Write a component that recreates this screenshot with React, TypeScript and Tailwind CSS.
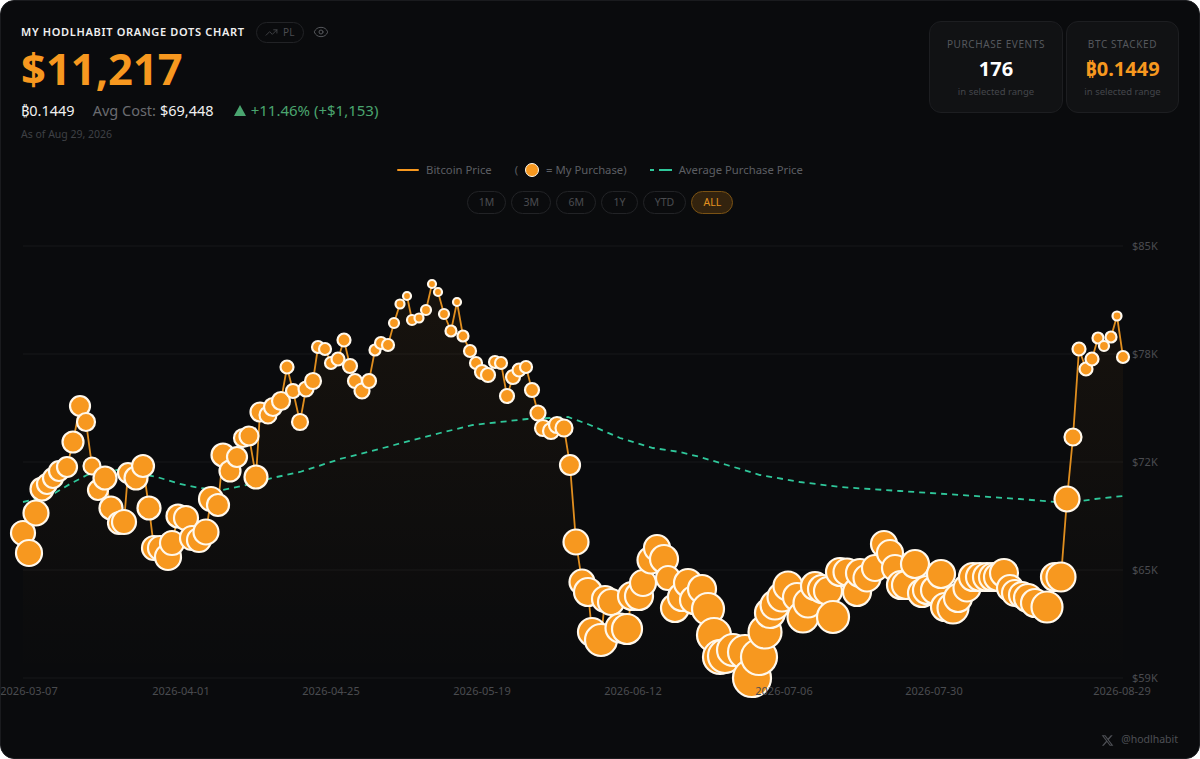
import {Eye, TrendingUp} from 'lucide-react';

// purchases, oldest first: x, y, outer radius (page px)
const dots: Array<[number, number, number]> = [
  [23, 533, 13], [29, 553, 14], [36, 513, 13.5], [42, 489, 12.5], [47, 484, 11], [53, 478, 11],
  [59, 471, 11], [67, 467, 11], [73, 442, 11.5], [80, 406, 11], [86, 422, 10], [92, 466, 9.5],
  [98, 490, 11], [105, 478, 12.5], [111, 508, 12.5], [119, 523, 12], [124, 522, 13], [128, 473, 11],
  [136, 478, 12.5], [143, 466, 12], [149, 508, 12.5], [154, 548, 13], [160, 548, 13], [168, 557, 14],
  [172, 543, 13], [178, 516, 12.5], [186, 518, 13], [192, 538, 13], [199, 540, 13], [206, 532, 13.5],
  [211, 499, 13], [218, 505, 12], [223, 455, 12.5], [230, 471, 11.5], [237, 457, 11], [243, 438, 10],
  [249, 436, 10.5], [256, 477, 12.5], [260, 412, 10.5], [268, 415, 9.5], [273, 407, 10], [281, 401, 10],
  [287, 367, 7.5], [293, 391, 8], [300, 422, 9], [306, 389, 8.5], [313, 381, 9], [318, 347, 7],
  [325, 349, 7], [331, 363, 7], [338, 359, 7.5], [344, 340, 7.5], [350, 366, 8], [355, 381, 8],
  [362, 391, 8.5], [369, 381, 8], [375, 350, 6.5], [381, 343, 7], [388, 345, 7], [394, 323, 6],
  [400, 304, 5.5], [407, 296, 5], [412, 320, 6], [419, 318, 5.5], [426, 310, 6], [432, 284, 5],
  [438, 292, 5], [444, 314, 6], [451, 331, 6.5], [457, 302, 5], [463, 336, 6.5], [470, 351, 7],
  [476, 363, 7], [482, 372, 8], [488, 375, 8], [495, 362, 7], [501, 363, 7], [507, 396, 8],
  [513, 377, 8], [519, 370, 7.5], [526, 367, 7], [532, 390, 8], [538, 413, 8.5], [543, 428, 9],
  [551, 431, 9], [557, 425, 9], [564, 428, 9.5], [570, 465, 11], [576, 542, 13.5], [582, 582, 13.5],
  [588, 592, 15], [592, 632, 15], [601, 640, 17], [605, 599, 14], [611, 602, 14], [620, 628, 15.5],
  [627, 629, 16], [632, 596, 15], [639, 596, 15], [643, 583, 14], [651, 560, 14.5], [657, 548, 14],
  [664, 559, 15], [668, 578, 13], [675, 608, 15], [682, 597, 15], [688, 583, 15], [694, 600, 15],
  [702, 589, 15], [708, 609, 17], [714, 635, 18], [720, 657, 18], [725, 656, 18], [733, 650, 17],
  [745, 652, 18], [752, 678, 20], [759, 657, 19], [765, 632, 17.5], [770, 613, 16], [775, 605, 15.5],
  [782, 597, 15.5], [788, 586, 15.5], [797, 597, 15], [803, 617, 16.5], [808, 603, 15.5], [815, 586, 15],
  [822, 589, 15], [828, 591, 15], [833, 617, 17], [840, 572, 15], [847, 572, 14.5], [857, 592, 15],
  [860, 573, 15], [867, 578, 14.5], [875, 568, 14], [884, 544, 14], [890, 553, 14], [895, 568, 14],
  [901, 585, 15], [906, 585, 15], [915, 564, 15], [922, 593, 15], [927, 590, 15], [935, 590, 15],
  [941, 574, 15], [945, 607, 15], [953, 608, 16.5], [958, 598, 15], [967, 588, 14.5], [973, 577, 15],
  [980, 577, 15], [987, 577, 15], [993, 577, 15], [998, 577, 15], [1004, 573, 15], [1010, 588, 14],
  [1015, 593, 14], [1022, 595, 14], [1028, 598, 15], [1035, 603, 15], [1047, 607, 16.5], [1055, 577, 15],
  [1061, 577, 15.5], [1067, 499, 13.5], [1073, 437, 9.5], [1079, 349, 7.5], [1086, 369, 7.5], [1092, 359, 7.5],
  [1098, 338, 6.5], [1104, 346, 6], [1111, 337, 6.5], [1117, 316, 5.5], [1123, 357, 7],
];

const avgLine = [
  [23, 502], [40, 498], [55, 493], [70, 484], [87, 475], [100, 471], [117, 470], [135, 473], [157, 477], [180, 484],
  [200, 488], [223, 490], [247, 485], [272, 478], [300, 472], [340, 459], [383, 448], [413, 440], [440, 433],
  [473, 425], [500, 422], [527, 419], [550, 418], [568, 417], [590, 425], [620, 438], [653, 448], [680, 452], [700, 457],
  [727, 465], [760, 475], [800, 482], [840, 487], [900, 491], [960, 495], [1020, 499], [1067, 503], [1095, 499], [1123, 496],
];

const gridLines = [
  {y: 246, label: '$85K'},
  {y: 354, label: '$78K'},
  {y: 462, label: '$72K'},
  {y: 570, label: '$65K'},
  {y: 678, label: '$59K'},
];

const dateLabels = [
  {x: 29, label: '2026-03-07'},
  {x: 181, label: '2026-04-01'},
  {x: 331, label: '2026-04-25'},
  {x: 482, label: '2026-05-19'},
  {x: 633, label: '2026-06-12'},
  {x: 784, label: '2026-07-06'},
  {x: 934, label: '2026-07-30'},
  {x: 1122, label: '2026-08-29'},
];

const ranges = ['1M', '3M', '6M', '1Y', 'YTD', 'ALL'];

const toPoints = (pts: number[][]) => pts.map((p) => `${p[0]},${p[1]}`).join(' ');

function StatCard({title, value, valueClass, width}: {title: string; value: string; valueClass: string; width: string}) {
  return (
    <div className={`${width} h-[92px] rounded-[12px] border border-[#1d1e21] bg-[#111214] flex flex-col items-center pt-[15px]`}>
      <div className="text-[10px] leading-[14px] tracking-[0.6px] text-[#55585d] uppercase">{title}</div>
      <div className={`text-[20px] leading-[28px] mt-[4px] font-bold ${valueClass}`}>{value}</div>
      <div className="text-[9.5px] leading-[14px] mt-[2px] text-[#44464b]">in selected range</div>
    </div>
  );
}

function PriceChart() {
  const linePts = dots.map((d) => [d[0], d[1]]);
  const areaPts = [[23, 678], ...linePts, [1123, 678]];
  return (
    <svg viewBox="0 228 1200 531" className="block w-[1200px] h-[531px] shrink-0">
      <defs>
        <linearGradient id="area" x1="0" y1="0" x2="0" y2="1">
          <stop offset="0%" stopColor="#f7931a" stopOpacity="0.055" />
          <stop offset="100%" stopColor="#f7931a" stopOpacity="0" />
        </linearGradient>
      </defs>
      {gridLines.map((g) => (
        <g key={g.y}>
          <line x1="23" x2="1123" y1={g.y} y2={g.y} stroke="#17181a" strokeWidth="1" />
          <text x="1132" y={g.y + 4} fontSize="11" fill="#4a4c50">{g.label}</text>
        </g>
      ))}
      <polygon points={toPoints(areaPts)} fill="url(#area)" />
      <polyline points={toPoints(avgLine)} fill="none" stroke="#2fc79a" strokeWidth="1.8" strokeDasharray="6 5" />
      <polyline points={toPoints(linePts)} fill="none" stroke="#e08e1f" strokeWidth="1.8" />
      {dots.map((d, i) => (
        <circle key={i} cx={d[0]} cy={d[1]} r={d[2] - 1} fill="#f7981f" stroke="#fff8ec" strokeWidth="2.2" />
      ))}
      {dateLabels.map((d) => (
        <text key={d.x} x={d.x} y="695" fontSize="11" fill="#4a4c50" textAnchor="middle">{d.label}</text>
      ))}
    </svg>
  );
}

export default function App() {
  return (
    <div
      className="relative w-[1200px] h-[759px] overflow-hidden rounded-[14px] border border-[#1a1b1e] bg-[#0a0b0d] text-white flex flex-col"
      style={{fontFamily: '"Noto Sans", "DejaVu Sans", sans-serif'}}
    >
      {/* Header */}
      <div className="flex justify-between h-[120px] shrink-0 pl-[20px] pr-[20px] pt-[20px]">
        <div>
          <div className="flex items-center h-[22px]">
            <span className="text-[11px] font-semibold tracking-[0.68px] text-[#f0f0f0]">MY HODLHABIT ORANGE DOTS CHART</span>
            <span className="ml-[11px] h-[21px] w-[48px] rounded-full border border-[#222326] flex items-center justify-center gap-[5px] text-[10px] text-[#4a4c50]">
              <TrendingUp size={13} strokeWidth={1.5} />
              PL
            </span>
            <Eye size={16} strokeWidth={1.5} className="ml-[9px] text-[#55575b]" />
          </div>
          <div className="text-[43.5px] leading-[48px] mt-[1px] font-bold text-[#f7981f]">$11,217</div>
          <div className="flex items-center text-[14.5px] leading-[20px] mt-[8px]">
            <span className="text-[#f0f0f0]">₿0.1449</span>
            <span className="ml-[18px] text-[#6a6c70]">Avg Cost:</span>
            <span className="ml-[4px] text-[#f0f0f0]">$69,448</span>
            <svg width="12" height="11" viewBox="0 0 12 11" className="ml-[20px]">
              <polygon points="6,0 12,11 0,11" fill="#4aa56f" />
            </svg>
            <span className="ml-[5px] text-[15px] text-[#4aa56f]">+11.46% (+$1,153)</span>
          </div>
          <div className="text-[10.5px] leading-[14px] mt-[7px] text-[#3f4145]">As of Aug 29, 2026</div>
        </div>
        <div className="flex gap-[3px]">
          <StatCard title="Purchase Events" value="176" valueClass="text-white" width="w-[134px]" />
          <StatCard title="BTC Stacked" value="₿0.1449" valueClass="text-[#f7981f]" width="w-[113px]" />
        </div>
      </div>

      {/* Legend */}
      <div className="flex items-center justify-center h-[18px] mt-[40px] shrink-0 text-[11.3px] text-[#5c5e63]">
        <span className="w-[22px] h-[2px] bg-[#f7981f] rounded-full" />
        <span className="ml-[7px]">Bitcoin Price</span>
        <span className="ml-[23px]">(</span>
        <span className="ml-[7px] w-[14px] h-[14px] rounded-full bg-[#f7981f] border border-[#fff8ec]" />
        <span className="ml-[7px]">= My Purchase)</span>
        <svg width="22" height="4" className="ml-[23px]">
          <line x1="0" y1="2" x2="22" y2="2" stroke="#2fc79a" strokeWidth="2" strokeDasharray="4 5 13 0" />
        </svg>
        <span className="ml-[7px]">Average Purchase Price</span>
      </div>

      {/* Range pills */}
      <div className="flex justify-center gap-[5px] mt-[12px] h-[23px] shrink-0">
        {ranges.map((r) =>
          r === 'ALL' ? (
            <span key={r} className="h-[23px] px-[11.2px] rounded-full border border-[#7a5214] bg-[#33230e] flex items-center text-[10.5px] text-[#e3921f]">
              {r}
            </span>
          ) : (
            <span key={r} className="h-[23px] px-[11.2px] rounded-full border border-[#222326] flex items-center text-[10.5px] text-[#4a4c50]">
              {r}
            </span>
          ),
        )}
      </div>

      {/* Chart */}
      <div className="mt-[14px] -ml-px">
        <PriceChart />
      </div>

      {/* Watermark */}
      <div className="absolute right-[21px] bottom-[10px] flex items-center gap-[7px] text-[10.5px] text-[#4e5055]">
        <svg viewBox="0 0 24 24" width="13" height="13" fill="currentColor">
          <path d="M18.244 2.25h3.308l-7.227 8.26 8.502 11.24H16.17l-5.214-6.817L4.99 21.75H1.68l7.73-8.835L1.254 2.25H8.08l4.713 6.231zm-1.161 17.52h1.833L7.084 4.126H5.117z" />
        </svg>
        @hodlhabit
      </div>
    </div>
  );
}
